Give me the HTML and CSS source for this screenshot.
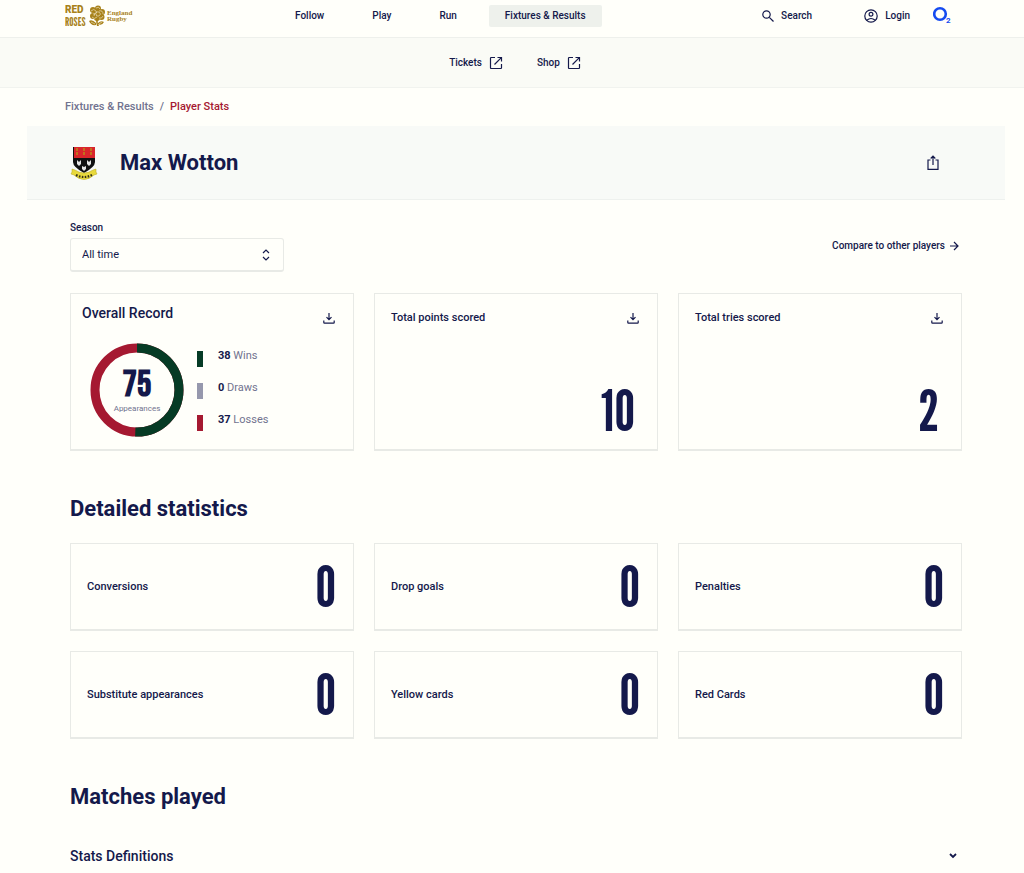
FILE: index.html
```html
<!DOCTYPE html>
<html lang="en">
<head>
<meta charset="utf-8">
<meta name="viewport" content="width=device-width, initial-scale=1">
<title>Max Wotton - Player Stats</title>
<link rel="stylesheet" href="styles.css">
</head>
<body>
<svg class="sprite" aria-hidden="true">
  <symbol id="external" viewBox="0 0 14 14"><path d="M6 1.500H2.200a.7.7 0 0 0-.7.7v9.600a.7.7 0 0 0 .7.7h9.600a.7.7 0 0 0 .7-.7V8M8.500 1.500h4v4M12.300 1.700 5.500 8.500"/></symbol>
  <symbol id="download" viewBox="0 0 12 12"><path d="M6 1v6.500M3.500 5.200 6 7.700l2.500-2.500M.8 8.500v2q0 .7.7.7h9q.7 0 .7-.7v-2"/></symbol>
</svg>
<header class="header">
  <a class="logo" href="#" aria-label="Red Roses England Rugby">
    <svg width="68" height="24" viewBox="0 0 68 24">
      <text class="logo-red" x="0" y="8">RED</text>
      <text class="logo-roses" x="0" y="21">ROSES</text>
      <g class="logo-rose">
        <circle cx="28" cy="5" r="3"/><circle cx="33" cy="3.500" r="3"/><circle cx="37" cy="7" r="3"/><circle cx="36.500" cy="12" r="3"/><circle cx="28" cy="11" r="3"/><circle cx="32" cy="13" r="3"/><circle cx="32.500" cy="8" r="4"/>
        <path d="M31 14q0 4 1 7h2q-2-3-1-7zM31 18q-4-4-7-2 2 5 7 4zM33 18q3-3 6-1-2 4-6 2z"/>
        <path class="logo-vein" d="M26 6q3-3 5 0t-3 3M31 3q3-2 4 1M34 6q4-1 4 3M29 11q1-5 5-4 3 2 0 4-3 1-3-2M27 12q2 3 5 0M34 13q3 1 4-2M26 17l4 2M37 17l-3 2"/>
      </g>
      <text class="logo-name" x="42" y="10">England</text>
      <text class="logo-name" x="42" y="16">Rugby</text>
    </svg>
  </a>
  <nav class="nav" aria-label="Main">
    <a href="#">Follow</a><a href="#">Play</a><a href="#">Run</a><a class="active" href="#">Fixtures &amp; Results</a>
  </nav>
  <div class="actions">
    <button class="action search" type="button"><svg class="icon" width="12" height="12" viewBox="0 0 12 12"><circle cx="4.500" cy="4.500" r="3.700"/><path d="m7.300 7.300 4.200 4.200"/></svg>Search</button>
    <a class="action login" href="#"><svg class="icon" width="14" height="14" viewBox="0 0 14 14"><circle cx="7" cy="7" r="6.200"/><circle cx="7" cy="5.300" r="1.900"/><path d="M2.800 11.300Q7 7.700 11.200 11.300"/></svg>Login</a>
    <a class="sponsor" href="#" aria-label="O2"><svg width="19" height="19" viewBox="0 0 19 19"><circle cx="7" cy="8" r="5.800"/><text x="13" y="17">2</text></svg></a>
  </div>
</header>
<nav class="subnav" aria-label="Quick links">
  <a href="#">Tickets<svg class="icon" width="14" height="14"><use href="#external"/></svg></a>
  <a href="#">Shop<svg class="icon" width="14" height="14"><use href="#external"/></svg></a>
</nav>
<nav class="crumbs" aria-label="Breadcrumb"><a href="#">Fixtures &amp; Results</a><span>/</span><a class="current" href="#" aria-current="page">Player Stats</a></nav>
<main>
  <section class="banner">
    <svg class="crest" width="28" height="36" viewBox="0 0 28 36" role="img" aria-label="Club crest">
      <path fill="#111" d="M3 2h22v15q0 5-11 11Q3 22 3 17z"/>
      <path fill="#d9252b" d="M4 2h21v11H4z"/>
      <path stroke="#b98b18" stroke-width="1.500" stroke-dasharray="3 1" d="M7 3v8M14 3v8M21 3v8"/>
      <path fill="#e5e5e5" d="m7 15 2 2 2-2v4l-2 2-2-2zM17 15l2 2 2-2v4l-2 2-2-2zM12 21l2 1 2-1v3l-2 2-2-2z"/>
      <path fill="#e8d93c" stroke="#b5a51d" stroke-width=".5" d="m2 24 3 1q9 6 18 0l3-1v3l1 2-3 1q-10 9-20 0l-3-1 1-2z"/>
      <path fill="none" stroke="#343019" stroke-width="2.200" stroke-dasharray="1.600 1.400" d="M6 30q8 4 16 0"/>
    </svg>
    <h1>Max Wotton</h1>
    <button class="share" type="button" aria-label="Share"><svg class="icon" width="12" height="16" viewBox="0 0 12 16"><path d="M3.500 5H1v9.300h10V5H8.500M6 10V1.200M3.700 3.500 6 1.200l2.300 2.300"/></svg></button>
  </section>
  <div class="content">
    <div class="filters">
      <div class="field">
        <label for="season">Season</label>
        <div class="select">
          <select id="season"><option>All time</option></select>
          <svg class="icon" width="8" height="12" viewBox="0 0 8 12"><path d="m1 4 3-3 3 3M1 8l3 3 3-3"/></svg>
        </div>
      </div>
      <a class="compare" href="#">Compare to other players<svg class="icon" width="9" height="10" viewBox="0 0 9 10"><path d="M0 5h8M4 1l4 4-4 4"/></svg></a>
    </div>
    <div class="grid summary">
      <section class="card record">
        <div class="card-head"><h3>Overall Record</h3><button type="button" aria-label="Download overall record"><svg class="icon" width="12" height="12"><use href="#download"/></svg></button></div>
        <div class="record-body">
          <div class="donut">
            <svg width="94" height="94" viewBox="0 0 94 94" aria-hidden="true"><circle cx="47" cy="47" r="42"/><circle class="wins" cx="47" cy="47" r="42" pathLength="75" stroke-dasharray="38 37" transform="rotate(-90 47 47)"/></svg>
            <div class="donut-text"><strong>75</strong><span>Appearances</span></div>
          </div>
          <ul class="legend">
            <li class="win"><span><b>38</b> Wins</span></li>
            <li class="draw"><span><b>0</b> Draws</span></li>
            <li class="loss"><span><b>37</b> Losses</span></li>
          </ul>
        </div>
      </section>
      <section class="card total">
        <div class="card-head"><h3>Total points scored</h3><button type="button" aria-label="Download total points"><svg class="icon" width="12" height="12"><use href="#download"/></svg></button></div>
        <p class="number">10</p>
      </section>
      <section class="card total">
        <div class="card-head"><h3>Total tries scored</h3><button type="button" aria-label="Download total tries"><svg class="icon" width="12" height="12"><use href="#download"/></svg></button></div>
        <p class="number">2</p>
      </section>
    </div>
    <h2>Detailed statistics</h2>
    <div class="grid">
      <section class="card stat"><h3>Conversions</h3><p class="number">0</p></section>
      <section class="card stat"><h3>Drop goals</h3><p class="number">0</p></section>
      <section class="card stat"><h3>Penalties</h3><p class="number">0</p></section>
      <section class="card stat"><h3>Substitute appearances</h3><p class="number">0</p></section>
      <section class="card stat"><h3>Yellow cards</h3><p class="number">0</p></section>
      <section class="card stat"><h3>Red Cards</h3><p class="number">0</p></section>
    </div>
    <h2>Matches played</h2>
    <button class="definitions" type="button" aria-expanded="false">Stats Definitions<svg class="icon" width="8" height="6" viewBox="0 0 8 6"><path d="m1 1 3 3 3-3"/></svg></button>
  </div>
</main>
</body>
</html>
```
FILE: styles.css
```css
:root {
  --ink: #14194b;
  --muted: #71738f;
  --line: #e8eae6;
  --paper: #fffffa;
  --red: #a51931;
  --green: #063b25;
  --condensed: "League Gothic", "Bebas Neue", "Oswald", "Liberation Sans Narrow", Roboto, sans-serif;
  --display: "Bebas Neue", "Oswald", "Liberation Sans Narrow", Roboto, sans-serif;
}
* { box-sizing: border-box; }
body { margin: 0; background: var(--paper); color: var(--ink); font: 500 10px/16px Roboto, sans-serif; }
a { color: inherit; text-decoration: none; }
button { padding: 0; border: 0; background: none; color: inherit; font: inherit; cursor: pointer; }
h1, h2, h3, p, ul { margin: 0; padding: 0; }
svg { display: block; flex: none; }
.sprite { position: absolute; width: 0; height: 0; }
.icon { fill: none; stroke: var(--ink); stroke-width: 1.2; }

.header { display: flex; align-items: flex-start; padding: 5px 72px 0 65px; height: 38px; border-bottom: 1px solid #eef0ec; }
.logo-red { font: 900 10px Roboto, sans-serif; fill: #a8821c; }
.logo-roses { font: 400 12px var(--condensed); fill: #a8821c; }
.logo-name { font: 700 7px "Liberation Serif", serif; fill: #a8821c; }
.logo-rose { fill: #a8821c; }
.logo-vein { fill: none; stroke: #f4edcf; stroke-width: .6; }
.nav { display: flex; gap: 16px; margin-left: 146px; }
.nav a { padding: 3px 16px; border-radius: 2px; }
.nav .active { background: #eef1ec; }
.actions { display: flex; margin-left: auto; padding-top: 2px; }
.action { display: flex; align-items: center; gap: 7px; }
.login { margin-left: 52px; }
.sponsor { margin-left: 23px; margin-top: -1px; }
.sponsor circle { fill: none; stroke: #154bf0; stroke-width: 2.6; }
.sponsor text { font: 700 8px Roboto, sans-serif; fill: #154bf0; }

.subnav { display: flex; justify-content: center; gap: 34px; padding: 17px 0 16px 6px; background: #fafbf6; border-bottom: 1px solid #f1f3ef; }
.subnav a { display: flex; align-items: center; gap: 7px; }

.crumbs { display: flex; gap: 6px; padding: 11px 65px; font-size: 11px; color: var(--muted); }
.crumbs .current { color: var(--red); }

.banner { display: flex; align-items: center; gap: 22px; margin: 0 19px 0 27px; padding: 19px 66px 18px 43px; background: #f8faf7; border-bottom: 1px solid #eef1ee; }
h1, h2 { font-size: 22px; line-height: 36px; font-weight: 700; }
.share { margin-left: auto; }

.content { padding: 20px 62px 0 70px; }
.filters { display: flex; justify-content: space-between; align-items: center; }
.field { width: 214px; }
.field label { display: block; margin-bottom: 2px; }
.select { display: grid; align-items: center; }
.select select, .select svg { grid-area: 1 / 1; }
.select svg { justify-self: end; margin-right: 14px; pointer-events: none; }
.select select { appearance: none; width: 100%; height: 34px; padding: 0 11px; border: 1px solid var(--line); border-bottom-width: 2px; border-radius: 3px; background: var(--paper); color: var(--ink); font: 400 11px Roboto, sans-serif; }
.compare { display: flex; align-items: center; gap: 5px; margin-right: 3px; }

.grid { display: grid; grid-template-columns: repeat(3, minmax(0, 1fr)); gap: 20px; }
.summary { margin-top: 21px; }
.card { border: 1px solid var(--line); border-bottom-width: 2px; }
.card h3 { font-size: 11px; font-weight: 500; line-height: 16px; }
.card-head { display: flex; justify-content: space-between; align-items: center; }
.record { padding: 11px 18px 12px 11px; }
.record .card-head h3 { font-size: 14px; }
.record .card-head { align-items: flex-end; }
.record .card-head button { margin-bottom: -3px; }
.record-body { display: flex; align-items: center; gap: 13px; padding: 22px 0 0 8px; }
.donut { display: grid; place-items: center; }
.donut > * { grid-area: 1 / 1; }
.donut circle { fill: none; stroke: var(--red); stroke-width: 9; }
.donut .wins { stroke: var(--green); }
.donut-text { display: grid; justify-items: center; }
.donut strong { padding-top: 4px; font: 700 36px/34px var(--display); }
.donut span { font-size: 8px; line-height: 12px; font-weight: 400; color: var(--muted); }
.legend { display: grid; gap: 16px; padding-top: 2px; list-style: none; font-size: 11px; font-weight: 400; color: var(--muted); }
.legend li { padding-left: 15px; border-left: 6px solid; }
.legend b { color: var(--ink); }
.legend .win { border-color: var(--green); }
.legend .draw { border-color: #9698ad; }
.legend .loss { border-color: var(--red); }
.legend span { display: block; margin-top: -3px; padding-bottom: 3px; }
.total { display: flex; flex-direction: column; justify-content: space-between; padding: 16px 18px 8px 16px; }
.number { padding-bottom: 2px; font: 400 58px/58px var(--condensed); }
.total .number { text-align: right; padding-right: 4px; }
.stat { display: flex; align-items: center; justify-content: space-between; min-height: 88px; padding: 0 17px 0 16px; }
.content h2 { margin-bottom: 16px; }
.grid + h2 { margin-top: 40px; }
.definitions { display: flex; width: 100%; justify-content: space-between; align-items: center; margin-top: 31px; padding-right: 5px; font-size: 14px; line-height: 20px; }
.definitions .icon { stroke-width: 1.8; }
```
